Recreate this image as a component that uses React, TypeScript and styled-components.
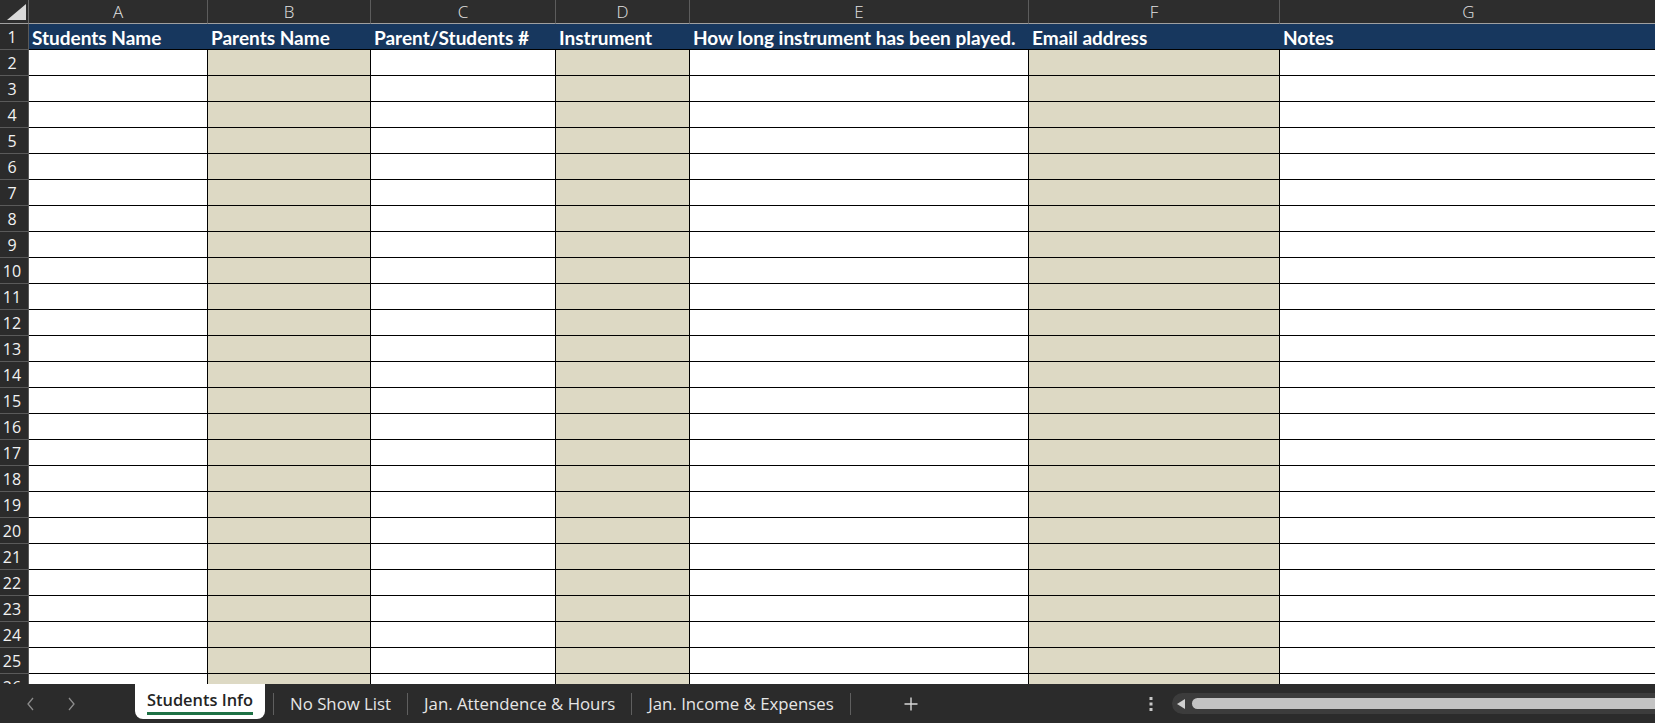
import * as React from "react";
import styled, { createGlobalStyle } from "styled-components";

const GlobalStyle = createGlobalStyle`
  html, body {
    margin: 0;
    padding: 0;
    background: #2b2b2b;
    overflow: hidden;
  }
`;

type Column = { letter: string; width: number; title: string; tan: boolean };

const columns: Column[] = [
  { letter: "A", width: 179, title: "Students Name", tan: false },
  { letter: "B", width: 163, title: "Parents Name", tan: true },
  { letter: "C", width: 185, title: "Parent/Students #", tan: false },
  { letter: "D", width: 134, title: "Instrument", tan: true },
  { letter: "E", width: 339, title: "How long instrument has been played.", tan: false },
  { letter: "F", width: 251, title: "Email address", tan: true },
  { letter: "G", width: 378, title: "Notes", tan: false },
];

const sheets = ["No Show List", "Jan. Attendence & Hours", "Jan. Income & Expenses"];

const ROW_COUNT = 26;

const Window = styled.div`
  display: flex;
  flex-direction: column;
  width: 1655px;
  height: 723px;
  background: #2b2b2b;
  overflow: hidden;
`;

const Sheet = styled.div`
  flex: 1;
  overflow: hidden;
  display: grid;
  grid-template-columns: 29px ${columns.map((c) => `${c.width}px`).join(" ")};
  grid-template-rows: 24px repeat(${ROW_COUNT}, 26px);
  align-content: start;
  background: #ffffff;
`;

const Corner = styled.div`
  box-sizing: border-box;
  background: #2d2d2d;
  border-right: 1px solid #6a6a6a;
  border-bottom: 1px solid #a0a0a0;
  display: flex;
  align-items: flex-end;
  justify-content: flex-end;
  padding: 0 1px 2px 0;
`;

const ColHead = styled.div`
  box-sizing: border-box;
  background: #2d2d2d;
  color: #e2e2e2;
  font-family: "Open Sans", "Noto Sans", sans-serif;
  font-weight: 300;
  font-size: 17px;
  display: flex;
  align-items: center;
  justify-content: center;
  border-right: 1px solid #5c5c5c;
  border-bottom: 1px solid #a0a0a0;
`;

const RowHead = styled.div`
  box-sizing: border-box;
  background: #2b2b2b;
  color: #f2f2f2;
  font-family: "Open Sans", "Noto Sans", sans-serif;
  font-size: 16px;
  display: flex;
  align-items: center;
  justify-content: center;
  padding-right: 4px;
  border-right: 1px solid #5a5a5a;
  border-bottom: 1px solid #5a5a5a;
`;

const TitleCell = styled.div`
  box-sizing: border-box;
  background: #17375e;
  color: #ffffff;
  font-family: Lato, "Liberation Sans", sans-serif;
  font-weight: 700;
  font-size: 19px;
  line-height: 22px;
  display: flex;
  align-items: flex-end;
  padding: 0 3px;
  white-space: nowrap;
  border-bottom: 1px solid #000000;
`;

const Cell = styled.div<{ $tan: boolean }>`
  box-sizing: border-box;
  background: ${(p) => (p.$tan ? "#ddd9c4" : "#ffffff")};
  border-right: 1px solid #000000;
  border-bottom: 1px solid #000000;
`;

const TabBar = styled.div`
  flex: none;
  height: 39px;
  display: flex;
  align-items: center;
  background: #2b2b2b;
  font-family: "Open Sans", "Noto Sans", sans-serif;
  font-size: 16.8px;
`;

const NavGroup = styled.div`
  box-sizing: border-box;
  width: 135px;
  padding-left: 11px;
  display: flex;
  align-items: center;
`;

const IconButton = styled.button<{ $width: number }>`
  width: ${(p) => p.$width}px;
  height: 30px;
  padding: 0;
  border: 0;
  background: none;
  display: flex;
  align-items: center;
  justify-content: center;
`;

const ActiveTab = styled.div`
  align-self: flex-start;
  box-sizing: border-box;
  height: 35px;
  margin-right: 8px;
  padding: 4px 12px 0 12px;
  background: #ffffff;
  border-radius: 0 0 8px 8px;
  color: #242424;
  font-size: 16.4px;
  font-weight: 600;
`;

const ActiveLabel = styled.span`
  display: block;
  line-height: 24px;
  border-bottom: 3px solid #1e7145;
`;

const Tab = styled.div`
  padding: 0 16px;
  color: #e6e6e6;
  line-height: 24px;
  white-space: nowrap;
`;

const Divider = styled.div`
  width: 1px;
  height: 22px;
  background: #5f5f5f;
`;

const RightGroup = styled.div`
  margin-left: auto;
  width: 515px;
  display: flex;
  align-items: center;
`;

const ScrollTrack = styled.div`
  flex: 1;
  height: 21px;
  margin-left: 10px;
  padding-left: 5px;
  display: flex;
  align-items: center;
  background: #3c3c3c;
  border-radius: 11px 0 0 11px;
`;

const ScrollThumb = styled.div`
  flex: 1;
  height: 11px;
  margin-left: 7px;
  background: #c3c3c3;
  border-radius: 6px 0 0 6px;
`;

const Chevron = ({ dir }: { dir: "left" | "right" }) => (
  <svg width="10" height="16" viewBox="0 0 10 16">
    <polyline
      points={dir === "left" ? "7,2 2,8 7,14" : "3,2 8,8 3,14"}
      fill="none"
      stroke="#8c8c8c"
      strokeWidth="1.3"
    />
  </svg>
);

const App = () => (
  <Window>
    <GlobalStyle />
    <Sheet>
      <Corner>
        <svg width="20" height="17" viewBox="0 0 20 17">
          <polygon points="19,0 19,16 0,16" fill="#d9d9d9" />
        </svg>
      </Corner>
      {columns.map((c) => (
        <ColHead key={c.letter}>{c.letter}</ColHead>
      ))}

      <RowHead>1</RowHead>
      {columns.map((c) => (
        <TitleCell key={c.letter}>{c.title}</TitleCell>
      ))}

      {Array.from({ length: ROW_COUNT - 1 }, (_, i) => (
        <React.Fragment key={i}>
          <RowHead>{i + 2}</RowHead>
          {columns.map((c) => (
            <Cell key={c.letter} $tan={c.tan} />
          ))}
        </React.Fragment>
      ))}
    </Sheet>

    <TabBar>
      <NavGroup>
        <IconButton $width={40}>
          <Chevron dir="left" />
        </IconButton>
        <IconButton $width={40}>
          <Chevron dir="right" />
        </IconButton>
      </NavGroup>

      <ActiveTab>
        <ActiveLabel>Students Info</ActiveLabel>
      </ActiveTab>
      {sheets.map((name) => (
        <React.Fragment key={name}>
          <Divider />
          <Tab>{name}</Tab>
        </React.Fragment>
      ))}
      <Divider />
      <IconButton $width={40} style={{ marginLeft: 40 }}>
        <svg width="16" height="16" viewBox="0 0 16 16">
          <path d="M8 1.5v13M1.5 8h13" stroke="#d8d8d8" strokeWidth="1.4" />
        </svg>
      </IconButton>

      <RightGroup>
        <IconButton $width={22}>
          <svg width="4" height="16" viewBox="0 0 4 16">
            <rect x="0.5" y="1" width="3" height="3" fill="#c8c8c8" />
            <rect x="0.5" y="6.5" width="3" height="3" fill="#c8c8c8" />
            <rect x="0.5" y="12" width="3" height="3" fill="#c8c8c8" />
          </svg>
        </IconButton>
        <ScrollTrack>
          <svg width="8" height="10" viewBox="0 0 8 10">
            <polygon points="8,0 8,10 0,5" fill="#cfcfcf" />
          </svg>
          <ScrollThumb />
        </ScrollTrack>
      </RightGroup>
    </TabBar>
  </Window>
);

export default App;
